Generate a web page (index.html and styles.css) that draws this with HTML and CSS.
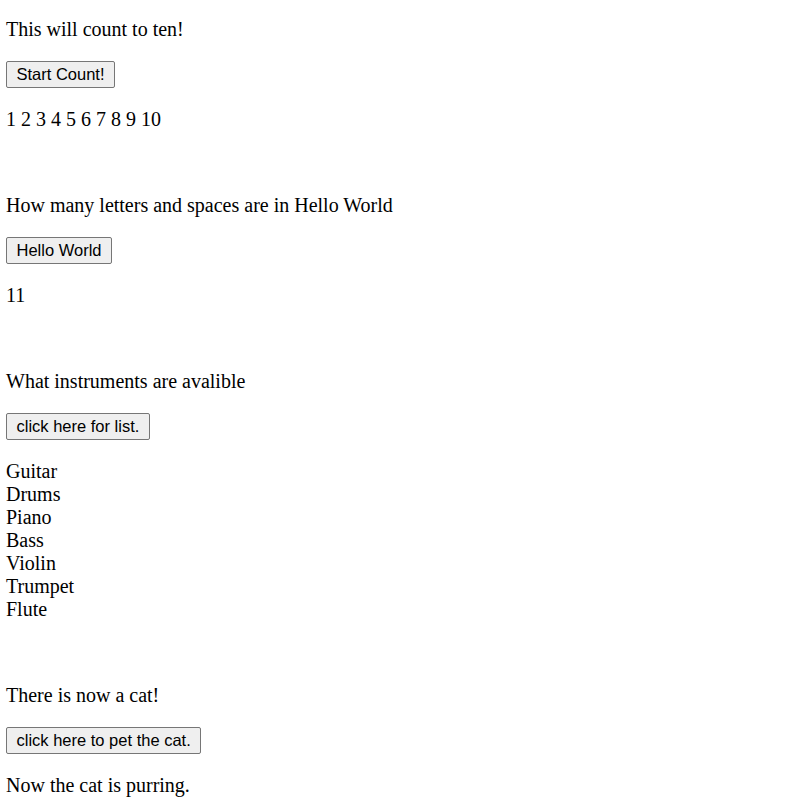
FILE: index.html
```html
<!DOCTYPE html>
<html lang="en">
<head>
<meta charset="utf-8">
<title>Counting</title>
<link rel="stylesheet" href="styles.css">
</head>
<body>
<main class="page">
  <p class="line">This will count to ten!</p>
  <div class="actions"><button class="btn" type="button">Start Count!</button></div>
  <p class="line">1 2 3 4 5 6 7 8 9 10</p>
  <p class="line"><br></p>

  <p class="line">How many letters and spaces are in Hello World</p>
  <div class="actions"><button class="btn" type="button">Hello World</button></div>
  <p class="line">11</p>
  <p class="line"><br></p>

  <p class="line">What instruments are avalible</p>
  <div class="actions"><button class="btn" type="button">click here for list.</button></div>
  <p class="line">Guitar<br>Drums<br>Piano<br>Bass<br>Violin<br>Trumpet<br>Flute</p>
  <p class="line"><br></p>

  <p class="line">There is now a cat!</p>
  <div class="actions"><button class="btn" type="button">click here to pet the cat.</button></div>
  <p class="line">Now the cat is purring.</p>
</main>
</body>
</html>
```
FILE: styles.css
```css
html, body {
  margin: 0;
  padding: 0;
  background: #ffffff;
}

.page {
  display: flex;
  flex-direction: column;
  gap: 20px;
  padding: 18px 6px 0 6px;
  font-family: "Liberation Serif", "Times New Roman", serif;
  font-size: 20px;
  line-height: 23px;
  color: #000000;
}

.line {
  margin: 0;
}

.actions {
  display: flex;
}

.btn {
  height: 27px;
  padding: 0 9.5px;
  margin: 0;
  font-family: "Liberation Sans", Arial, sans-serif;
  font-size: 16.5px;
  line-height: 19px;
  color: #000000;
  background: #efefef;
  border: 1px solid #767676;
  border-radius: 2px;
}
```
